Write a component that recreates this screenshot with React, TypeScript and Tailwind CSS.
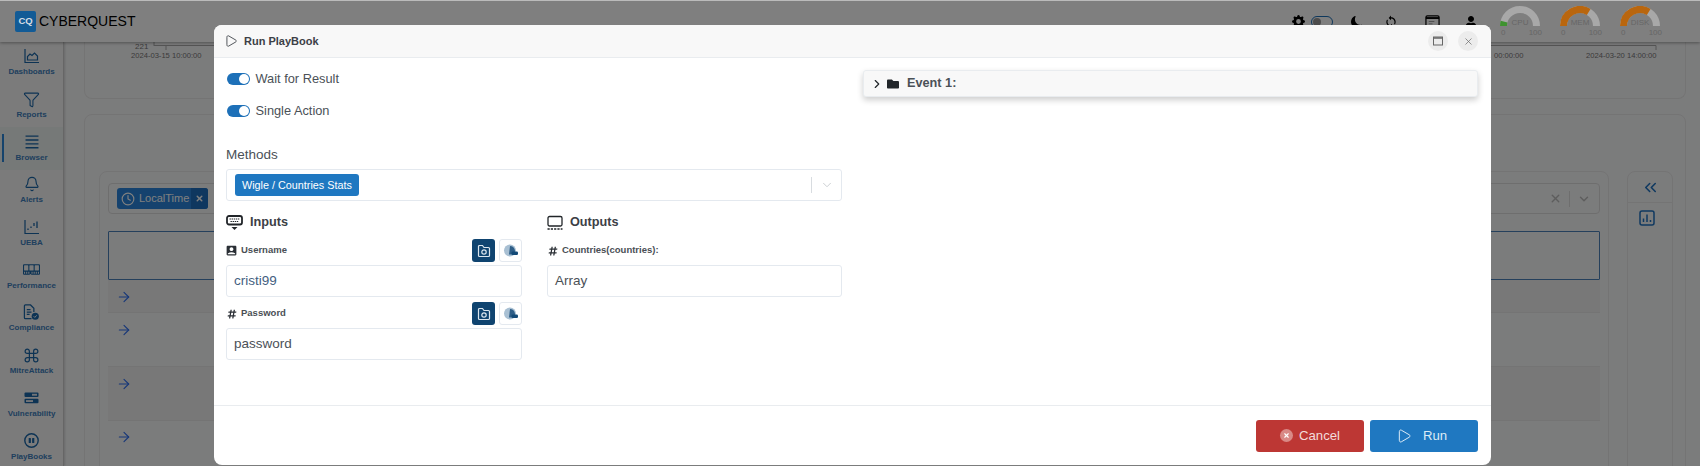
import { Bell, ChevronDown, ChevronRight, ChevronsLeft, Clock, Command, ArrowRight, Funnel, Play, X } from 'lucide-react';
import { BsGearFill, BsMemory, BsMoonFill } from 'react-icons/bs';
import { FaFolder, FaHashtag, FaUser } from 'react-icons/fa';
import { MdAccountBox, MdSync } from 'react-icons/md';
import type { ReactNode } from 'react';

function DashboardIcon() {
  return (
    <svg viewBox="0 0 16 16" className="h-[16px] w-[16px]" fill="none" stroke="currentColor" strokeWidth="1.2">
      <path d="M1 1v13.500h14" />
      <path d="M3.500 12V8.500L6 6l2 1.500L10.500 5l3 3v4z" />
    </svg>
  );
}

function BrowserIcon() {
  return (
    <svg viewBox="0 0 13 13" className="h-[14px] w-[14px]" stroke="currentColor" strokeWidth="1.300">
      <path d="M0.500 1h12M0.500 4.600h12M0.500 8.200h12M0.500 11.800h12" />
    </svg>
  );
}

function UebaIcon() {
  return (
    <svg viewBox="0 0 16 16" className="h-[16px] w-[16px]" fill="none" stroke="currentColor" strokeWidth="1.200">
      <path d="M1 1v13.500h14" />
      <path d="M4 11v-1.500M7 9V7.500M10 7V4M13 9V2.500" strokeWidth="1.300" />
    </svg>
  );
}

function ComplianceIcon() {
  return (
    <svg viewBox="0 0 18 18" className="h-[17px] w-[17px]" fill="none" stroke="currentColor" strokeWidth="1.300">
      <path d="M9 15.500H2.500a1 1 0 0 1-1-1V2a1 1 0 0 1 1-1H8l3.500 3.500V8.500" />
      <path d="M4 6h4M4 8.500h5M4 11h3" />
      <circle cx="13" cy="13" r="3.800" fill="currentColor" stroke="none" />
      <path d="M11.300 13l1.200 1.200 2-2.200" stroke="#fff" strokeWidth="1" />
    </svg>
  );
}

function VulnerabilityIcon() {
  return (
    <svg viewBox="0 0 15 12" className="h-[12px] w-[15px]">
      <rect x="0.500" y="0.500" width="14" height="4.500" rx="1" fill="currentColor" />
      <rect x="8" y="1.800" width="5" height="1.900" fill="#e6e9ee" />
      <rect x="0.500" y="6.800" width="14" height="4.500" rx="1" fill="currentColor" />
      <rect x="2" y="8.100" width="7" height="1.900" fill="#e6e9ee" />
    </svg>
  );
}

function PlaybooksIcon() {
  return (
    <svg viewBox="0 0 15 15" className="h-[15px] w-[15px]" fill="none" stroke="currentColor" strokeWidth="1.400">
      <circle cx="7.500" cy="7.500" r="6.700" />
      <rect x="4.700" y="5" width="2.200" height="5" rx="0.500" fill="currentColor" stroke="none" />
      <rect x="8.100" y="5" width="2.200" height="5" rx="0.500" fill="currentColor" stroke="none" />
    </svg>
  );
}

function CalendarIcon() {
  return (
    <svg viewBox="0 0 16 16" className="h-[15px] w-[15px]" fill="none" stroke="currentColor">
      <rect x="1" y="2" width="14" height="12" rx="1.500" strokeWidth="1.300" />
      <path d="M1 4.300h14" strokeWidth="2" />
      <path d="M4 8h6M4 10.500h4" strokeWidth="1" opacity="0.4" />
      <path d="M11 14l2-2.500 2 2.500z" fill="currentColor" stroke="none" />
    </svg>
  );
}

function Gauge({ label, color, end }: { label: string; color: string; end: string }) {
  return (
    <div className="relative z-[25] flex w-[60px] flex-col items-center">
      <svg viewBox="0 0 40 20" className="h-[20px] w-[40px]" fill="none" strokeWidth="7">
        <path d="M3.500 20A16.500 16.500 0 0 1 36.500 20" stroke="#a8a8a8" />
        <path d={end} stroke={color} />
      </svg>
      <div className="-mt-[8px] h-[10px] text-[8px] leading-[10px] text-[#666]">{label}</div>
      <div className="ml-[3px] flex h-[10px] w-[41px] justify-between text-[8px] leading-[10px] text-[#666]">
        <span>0</span>
        <span>100</span>
      </div>
    </div>
  );
}

function NavItem({ icon, label, active }: { icon: ReactNode; label: string; active?: boolean }) {
  return (
    <div className={`relative flex h-[42.7px] flex-col items-center justify-center pb-[3px] ${active ? 'bg-[#edf2f0]' : ''}`}>
      {active && <div className="absolute top-[7px] left-[2px] h-[28px] w-[1.500px] bg-[#2a86d8]" />}
      <div className="flex h-[20px] items-center text-[#1a66a8]">{icon}</div>
      <div className="text-[8px] font-bold leading-[11px] text-[#3f7fbc]">{label}</div>
    </div>
  );
}

function SourceButtons() {
  return (
    <div className="flex gap-[4px]">
      <button className="flex h-[23px] w-[23px] items-center justify-center rounded-[3px] bg-[#0f4470]">
        <svg viewBox="0 0 14 14" className="h-[14px] w-[14px]" fill="none" stroke="#dbe6ee" strokeWidth="1.200">
          <path d="M1.500 2.500V11.500a1 1 0 0 0 1 1h9a1 1 0 0 0 1-1V4.500a1 1 0 0 0-1-1H7L5.500 1.500H2.500a1 1 0 0 0-1 1z" />
          <circle cx="7" cy="8" r="2.200" />
        </svg>
      </button>
      <button className="flex h-[23px] w-[23px] items-center justify-center rounded-[3px] border border-[#e4e9ef] bg-white">
        <svg viewBox="0 0 16 14" className="h-[14px] w-[16px]">
          <circle cx="7" cy="6.500" r="6" fill="#a9c0d3" />
          <path d="M7 2a5 5 0 0 1 3.500 8.500H6z" fill="#2f5f88" />
          <rect x="8.500" y="7.500" width="6.500" height="3.500" rx="1.200" fill="#134a77" />
        </svg>
      </button>
    </div>
  );
}

function Field({ icon, label, value, color, buttons }: { icon: ReactNode; label: string; value: string; color: string; buttons?: boolean }) {
  return (
    <div className="mb-[5px]">
      <div className="flex h-[23px] items-center justify-between">
        <div className="flex items-center text-[9.500px] font-bold text-[#4a4f55]">
          <span className="flex w-[15px] items-center text-[#2a2f35]">{icon}</span>
          {label}
        </div>
        {buttons && <SourceButtons />}
      </div>
      <div className={`mt-[3px] flex h-[32px] items-center rounded-[3px] border border-[#e4e9ef] px-[7px] text-[13.500px] ${color}`}>{value}</div>
    </div>
  );
}

function Switch({ label }: { label: string }) {
  return (
    <div className="ml-[0.500px] flex items-center gap-[6px] text-[12.800px] leading-[16px] text-[#4b5157]">
      <div className="flex h-[12px] w-[23px] items-center justify-end rounded-full bg-[#1d70b8] pr-[1px]">
        <div className="h-[10px] w-[10px] rounded-full bg-white" />
      </div>
      {label}
    </div>
  );
}

const rows = [
  ['h-[33px]', 'bg-[#f1f1f1]'],
  ['h-[54px]', ''],
  ['h-[53.500px]', 'bg-[#f1f1f1]'],
  ['h-[53px]', ''],
];

export default function App() {
  return (
    <div className="relative h-[466px] w-[1700px] overflow-hidden bg-[#f7f8f9] font-['Liberation_Sans',Arial,sans-serif]">
      {/* App behind the dialog */}
      <header className="relative flex h-[42px] items-center justify-between border-t border-[#bbb] bg-white pr-[30px] pl-[15px] shadow-[0_1px_3px_rgba(0,0,0,0.35)]">
        <div className="flex items-center gap-[3px]">
          <div className="relative z-[25] flex h-[21px] w-[21px] items-center justify-center rounded-[2px] bg-[#125b96] text-[9.500px] font-bold text-[#d5dde5]">CQ</div>
          <span className="text-[14px] text-black">CYBERQUEST</span>
        </div>
        <div className="flex items-center text-black">
          <BsGearFill className="h-[13px] w-[13px]" />
          <div className="ml-[6px] h-[12px] w-[22px] rounded-full border border-[#1d70b8] bg-white">
            <div className="mt-px ml-px h-[8px] w-[8px] rounded-full bg-[#999]" />
          </div>
          <BsMoonFill className="ml-[18px] h-[12px] w-[12px]" />
          <MdSync className="ml-[21px] h-[14px] w-[14px]" />
          <div className="ml-[27px]"><CalendarIcon /></div>
          <FaUser className="ml-[25px] h-[12px] w-[12px]" />
          <div className="ml-[13px] flex">
            <Gauge label="CPU" color="#3f9230" end="M3.500 20A16.500 16.500 0 0 1 4.060 15.700" />
            <Gauge label="MEM" color="#b9660e" end="M3.500 20A16.500 16.500 0 0 1 28.700 6" />
            <Gauge label="DISK" color="#b9660e" end="M3.500 20A16.500 16.500 0 0 1 28.700 6" />
          </div>
        </div>
      </header>
      <div className="flex h-[424px]">
        <aside className="w-[64px] shrink-0 border-r border-[#ccc] bg-[#f6f6f6] shadow-[1px_0_2px_rgba(0,0,0,0.15)]">
          <NavItem icon={<DashboardIcon />} label="Dashboards" />
          <NavItem icon={<Funnel size={17} strokeWidth={1.500} />} label="Reports" />
          <NavItem icon={<BrowserIcon />} label="Browser" active />
          <NavItem icon={<Bell size={16} strokeWidth={1.700} />} label="Alerts" />
          <NavItem icon={<UebaIcon />} label="UEBA" />
          <NavItem icon={<BsMemory size={17} />} label="Performance" />
          <NavItem icon={<ComplianceIcon />} label="Compliance" />
          <NavItem icon={<Command size={17} strokeWidth={1.700} />} label="MitreAttack" />
          <NavItem icon={<VulnerabilityIcon />} label="Vulnerability" />
          <NavItem icon={<PlaybooksIcon />} label="PlayBooks" />
        </aside>
        <main className="flex-1 pr-[14px] pl-[20px]">
          <section className="h-[57px] rounded-b-[8px] border border-t-0 border-[#e8e8e8]">
            <svg viewBox="0 0 1600 24" className="h-[24px] w-full" fill="#777" fontFamily="Liberation Sans" fontSize="7.600">
              <path d="M69 3.500H1571M69 0V4M81 3.500V8M1571 3.500V8" stroke="#aaa" />
              <text x="50" y="7" fontSize="8">221</text>
              <text x="46" y="16">2024-03-15 10:00:00</text>
              <text x="1409" y="16">00:00:00</text>
              <text x="1501" y="16">2024-03-20 14:00:00</text>
            </svg>
          </section>
          <section className="mt-[15px] flex h-[400px] gap-[18px] rounded-t-[8px] border border-[#e8e8e8] pt-[56px] pr-[12px] pl-[14px]">
            <div className="flex-1 rounded-t-[8px] border border-[#e8e8e8] px-[8px] pt-[11px]">
              <div className="flex h-[31px] items-center justify-between rounded-[4px] border border-[#ddd] pr-[8px] pl-[8px]">
                <div className="flex h-[21px] w-[91px] items-center overflow-hidden rounded-[3px] bg-[#2a85dc] pl-[4px] text-[11px] text-white">
                  <Clock size={14} strokeWidth={2} />
                  <span className="ml-[4px] w-[52px]">LocalTime</span>
                  <span className="flex h-full flex-1 items-center justify-center bg-[#1e6fbf]">
                    <X size={9} strokeWidth={4} />
                  </span>
                </div>
                <div className="flex items-center text-[#bbb]">
                  <X size={13} strokeWidth={2.500} />
                  <div className="mx-[7px] h-[16px] w-px bg-[#ddd]" />
                  <ChevronDown size={14} strokeWidth={2.500} />
                </div>
              </div>
              <div className="mt-[17px] h-[49px] rounded-[1px] border border-[#4a80b8]" />
              {rows.map(([h, bg], i) => (
                <div key={i} className={`${h} ${bg} border-b border-[#e8e8e8] pt-[8.500px] pl-[8px] text-[#2f6ff0]`}>
                  <ArrowRight size={16} strokeWidth={1.700} />
                </div>
              ))}
            </div>
            <div className="w-[46px] rounded-t-[8px] border border-[#e8e8e8]">
              <div className="flex h-[31px] items-center justify-center border-b border-[#e8e8e8] text-[#1f72c0]">
                <ChevronsLeft size={19} strokeWidth={2} />
              </div>
              <div className="flex justify-center pt-[7px] pr-[6px] text-[#1f72c0]">
                <svg viewBox="0 0 16 16" className="h-[16px] w-[16px]" fill="none" stroke="currentColor" strokeWidth="1.500">
                  <rect x="1" y="1" width="14" height="14" rx="2" />
                  <path d="M4.500 12V8.500M8 12V4.500M11.500 12V10" />
                </svg>
              </div>
            </div>
          </section>
        </main>
      </div>

      <div className="absolute inset-x-0 top-[1px] bottom-0 z-20 bg-black/50" />

      {/* Run PlayBook dialog */}
      <div className="absolute top-[25px] left-[214px] z-30 flex h-[440px] w-[1277px] flex-col overflow-hidden rounded-[8px] bg-white">
        <div className="flex h-[33px] shrink-0 items-center justify-between border-b border-[#e9ecef] bg-[#f8f8f8] pr-[13px] pl-[10px]">
          <div className="flex items-center gap-[6px] text-[11px] font-bold text-[#3c4046]">
            <Play size={14} strokeWidth={1.500} />
            Run PlayBook
          </div>
          <div className="flex gap-[10px] text-[#666]">
            <div className="flex h-[20px] w-[20px] items-center justify-center rounded-full bg-[#ececec]">
              <svg viewBox="0 0 10 10" className="h-[10px] w-[10px]" fill="none" stroke="currentColor">
                <rect x="0.500" y="1" width="9" height="8" />
                <path d="M0.500 2h9" strokeWidth="1.500" />
              </svg>
            </div>
            <div className="flex h-[20px] w-[20px] items-center justify-center rounded-full bg-[#ececec]">
              <X size={11} strokeWidth={1.500} />
            </div>
          </div>
        </div>

        <div className="flex flex-1 gap-[21px] pt-[12px] pr-[13px] pl-[12px]">
          <div className="w-[616px]">
            <div className="mt-[1px]"><Switch label="Wait for Result" /></div>
            <div className="mt-[16px]"><Switch label="Single Action" /></div>
            <div className="mt-[28px] text-[13.500px] leading-[16px] text-[#4b5157]">Methods</div>
            <div className="mt-[6px] flex h-[32px] items-center justify-between rounded-[3px] border border-[#e4e9ef] pr-[7px] pl-[8px]">
              <div className="flex h-[22px] items-center rounded-[3px] bg-[#1f78c1] px-[7px] text-[10.800px] text-white">Wigle / Countries Stats</div>
              <div className="flex items-center text-[#c5c9cd]">
                <div className="mr-[8px] h-[16px] w-px bg-[#d8dce0]" />
                <ChevronDown size={14} strokeWidth={1.500} />
              </div>
            </div>
            <div className="mt-[10px] flex gap-[25px]">
              <div className="w-[296px]">
                <div className="mb-[4px] flex h-[24px] items-center gap-[7px] text-[12.700px] font-bold text-[#3c4046]">
                  <svg viewBox="0 0 17 16" className="h-[16px] w-[17px]" fill="none" stroke="#212529">
                    <rect x="1" y="1" width="15" height="8.500" rx="2" strokeWidth="1.800" />
                    <path d="M3.500 4h10M4.500 6.500h8" strokeWidth="1.200" strokeDasharray="1.400 0.700" />
                    <path d="M5.500 12h6l-3 3z" fill="#212529" stroke="none" />
                  </svg>
                  Inputs
                </div>
                <Field icon={<MdAccountBox className="-ml-[1.500px] h-[13px] w-[13px]" />} label="Username" value="cristi99" color="text-[#44607f]" buttons />
                <Field icon={<FaHashtag className="ml-[1px] h-[10px] w-[10px]" />} label="Password" value="password" color="text-[#4b5157]" buttons />
              </div>
              <div className="w-[295px]">
                <div className="mb-[4px] flex h-[24px] items-center gap-[7px] text-[12.700px] font-bold text-[#3c4046]">
                  <svg viewBox="0 0 16 16" className="h-[16px] w-[16px]" fill="none" stroke="#212529" strokeWidth="1.300">
                    <rect x="1" y="1.500" width="14" height="9.500" rx="1.500" />
                    <path d="M0.500 14h15" strokeWidth="1.500" strokeDasharray="2.200 1.100" />
                  </svg>
                  Outputs
                </div>
                <Field icon={<FaHashtag className="ml-[1px] h-[10px] w-[10px]" />} label="Countries(countries):" value="Array" color="text-[#4b5157]" />
              </div>
            </div>
          </div>
          <div className="flex h-[27px] flex-1 items-center rounded-[3px] border border-[#e9ecef] bg-[#f8f8f8] pl-[6px] text-[12.700px] font-bold text-[#4b5157] shadow-[0_3px_6px_rgba(0,0,0,0.2)]">
            <ChevronRight size={14} strokeWidth={2} className="text-[#212529]" />
            <FaFolder className="ml-[3px] h-[12px] w-[12px] text-[#212529]" />
            <span className="ml-[8px]">Event 1:</span>
          </div>
        </div>

        <div className="flex h-[60px] shrink-0 items-center justify-end gap-[6px] border-t border-[#e9ecef] pr-[13px]">
          <button className="flex h-[32px] w-[108px] items-center justify-center gap-[6px] rounded-[3px] bg-[#bd3734] text-[13.200px] text-[#f3dcdc]">
            <span className="flex h-[13px] w-[13px] items-center justify-center rounded-full bg-[#d98986]">
              <X size={7} strokeWidth={4} className="text-white" />
            </span>
            Cancel
          </button>
          <button className="flex h-[32px] w-[108px] items-center justify-center gap-[11px] rounded-[3px] bg-[#1f78c1] pr-[5px] text-[13.200px] text-[#dcebf6]">
            <Play size={16} strokeWidth={1.500} />
            Run
          </button>
        </div>
      </div>
    </div>
  );
}
